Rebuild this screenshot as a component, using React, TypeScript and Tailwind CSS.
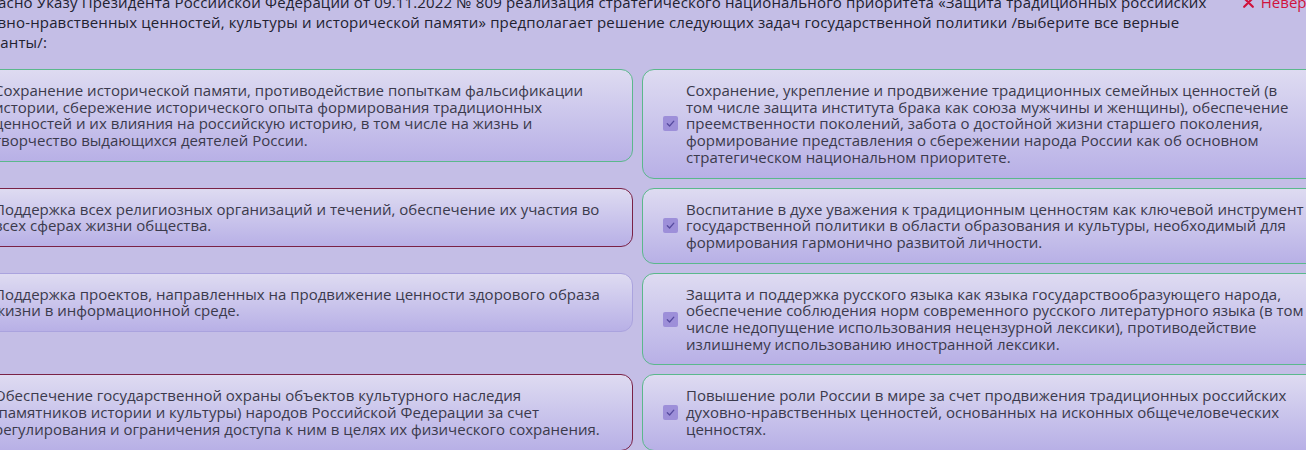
import React from "react";

type Answer = {
  text: string;
  checked: boolean;
  state: "correct" | "wrong" | "neutral";
};

const rows: [Answer, Answer][] = [
  [
    {
      text: "Сохранение исторической памяти, противодействие попыткам фальсификации истории, сбережение исторического опыта формирования традиционных ценностей и их влияния на российскую историю, в том числе на жизнь и творчество выдающихся деятелей России.",
      checked: false,
      state: "correct",
    },
    {
      text: "Сохранение, укрепление и продвижение традиционных семейных ценностей (в том числе защита института брака как союза мужчины и женщины), обеспечение преемственности поколений, забота о достойной жизни старшего поколения, формирование представления о сбережении народа России как об основном стратегическом национальном приоритете.",
      checked: true,
      state: "correct",
    },
  ],
  [
    {
      text: "Поддержка всех религиозных организаций и течений, обеспечение их участия во всех сферах жизни общества.",
      checked: false,
      state: "wrong",
    },
    {
      text: "Воспитание в духе уважения к традиционным ценностям как ключевой инструмент государственной политики в области образования и культуры, необходимый для формирования гармонично развитой личности.",
      checked: true,
      state: "correct",
    },
  ],
  [
    {
      text: "Поддержка проектов, направленных на продвижение ценности здорового образа жизни в информационной среде.",
      checked: false,
      state: "neutral",
    },
    {
      text: "Защита и поддержка русского языка как языка государствообразующего народа, обеспечение соблюдения норм современного русского литературного языка (в том числе недопущение использования нецензурной лексики), противодействие излишнему использованию иностранной лексики.",
      checked: true,
      state: "correct",
    },
  ],
  [
    {
      text: "Обеспечение государственной охраны объектов культурного наследия (памятников истории и культуры) народов Российской Федерации за счет регулирования и ограничения доступа к ним в целях их физического сохранения.",
      checked: false,
      state: "wrong",
    },
    {
      text: "Повышение роли России в мире за счет продвижения традиционных российских духовно-нравственных ценностей, основанных на исконных общечеловеческих ценностях.",
      checked: true,
      state: "correct",
    },
  ],
];

const borderFor = {
  correct: "border-[#5bb88c]",
  wrong: "border-[#7a2246]",
  neutral: "border-[#aaa3de]",
};

function Check() {
  return (
    <span className="flex h-[15px] w-[15px] shrink-0 items-center justify-center rounded-[2px] bg-[#9d8fd9]">
      <svg width="11" height="11" viewBox="0 0 12 12" fill="none">
        <path d="M2.5 6.3 L5 8.7 L9.6 3.4" stroke="#564a9e" strokeWidth="1.4" strokeLinecap="round" strokeLinejoin="round" />
      </svg>
    </span>
  );
}

function Card({ a }: { a: Answer }) {
  return (
    <div
      className={`flex items-center gap-[8px] rounded-[12px] border bg-gradient-to-b from-[#dedbf1] to-[#b8b0e6] py-[12px] pl-[20px] pr-[16px] ${borderFor[a.state]}`}
    >
      {a.checked ? <Check /> : <span className="h-[15px] w-[15px] shrink-0" />}
      <p className="text-[15px] leading-[16.7px] text-[#3b3a4c]">{a.text}</p>
    </div>
  );
}

export default function App() {
  return (
    <div
      className="h-[450px] w-full overflow-hidden bg-[#c4bee6]"
      style={{ fontFamily: '"Open Sans", "Noto Sans", sans-serif' }}
    >
      <div className="-ml-[50px] -mt-[8px] w-[1375px]">
        <div className="flex items-start gap-[10px] pl-[14px]">
          <p className="w-[1268px] text-[15px] font-medium leading-[20px] tracking-[0.15px] text-[#222230]">
            Согласно Указу Президента Российской Федерации от 09.11.2022 № 809 реализация стратегического национального приоритета «Защита традиционных российских духовно-нравственных ценностей, культуры и исторической памяти» предполагает решение следующих задач государственной политики /выберите все верные варианты/:
          </p>
          <div className="flex items-center gap-[6px] whitespace-nowrap text-[15px] leading-[20px] text-[#d0123c]">
            <svg width="13" height="13" viewBox="0 0 12 12" fill="none">
              <path d="M2 2 L10 10 M10 2 L2 10" stroke="#d0123c" strokeWidth="2" strokeLinecap="round" />
            </svg>
            Неверно
          </div>
        </div>
        <div className="mt-[17px] grid grid-cols-2 items-start gap-[9px]">
          {rows.map(([l, r], i) => (
            <React.Fragment key={i}>
              <Card a={l} />
              <Card a={r} />
            </React.Fragment>
          ))}
        </div>
      </div>
    </div>
  );
}
